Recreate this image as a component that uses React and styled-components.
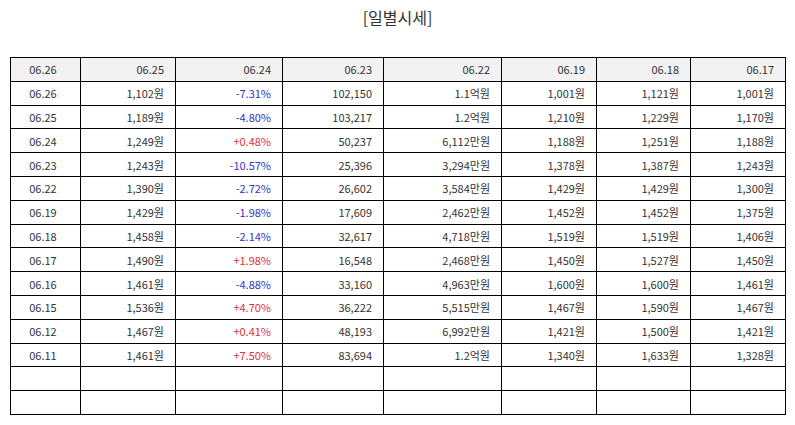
import React from 'react';
import styled, { createGlobalStyle } from 'styled-components';

const GlobalStyle = createGlobalStyle`
  html, body {
    margin: 0;
    padding: 0;
    background: #fff;
  }
  body {
    font-family: 'Noto Sans CJK KR', 'Noto Sans', sans-serif;
  }
`;

const heads = ['06.26', '06.25', '06.24', '06.23', '06.22', '06.19', '06.18', '06.17'];

const rows = [
  ['06.26', '1,102원', '-7.31%', '102,150', '1.1억원', '1,001원', '1,121원', '1,001원'],
  ['06.25', '1,189원', '-4.80%', '103,217', '1.2억원', '1,210원', '1,229원', '1,170원'],
  ['06.24', '1,249원', '+0.48%', '50,237', '6,112만원', '1,188원', '1,251원', '1,188원'],
  ['06.23', '1,243원', '-10.57%', '25,396', '3,294만원', '1,378원', '1,387원', '1,243원'],
  ['06.22', '1,390원', '-2.72%', '26,602', '3,584만원', '1,429원', '1,429원', '1,300원'],
  ['06.19', '1,429원', '-1.98%', '17,609', '2,462만원', '1,452원', '1,452원', '1,375원'],
  ['06.18', '1,458원', '-2.14%', '32,617', '4,718만원', '1,519원', '1,519원', '1,406원'],
  ['06.17', '1,490원', '+1.98%', '16,548', '2,468만원', '1,450원', '1,527원', '1,450원'],
  ['06.16', '1,461원', '-4.88%', '33,160', '4,963만원', '1,600원', '1,600원', '1,461원'],
  ['06.15', '1,536원', '+4.70%', '36,222', '5,515만원', '1,467원', '1,590원', '1,467원'],
  ['06.12', '1,467원', '+0.41%', '48,193', '6,992만원', '1,421원', '1,500원', '1,421원'],
  ['06.11', '1,461원', '+7.50%', '83,694', '1.2억원', '1,340원', '1,633원', '1,328원'],
];

const widths = [70, 95, 107, 101, 118, 95, 94, 95];

const Page = styled.div`
  padding: 0 10px;
`;

const Title = styled.h2`
  margin: 0;
  padding-top: 6px;
  height: 57px;
  box-sizing: border-box;
  text-align: center;
  font-size: 16px;
  font-weight: 400;
  color: #333;
  line-height: 22px;
`;

const Table = styled.table`
  width: 775px;
  border-collapse: collapse;
  table-layout: fixed;
  font-size: 11px;
  color: #333;
`;

const Row = styled.tr`
  height: 23.8px;
`;

const Cell = styled.td`
  border: 1px solid #000;
  padding: 0 11px 0 6px;
  text-align: ${(p) => (p.$first ? 'center' : 'right')};
  background: ${(p) => (p.$head ? '#f2f2f2' : '#fff')};
  color: ${(p) => (p.$tone === 'up' ? '#e0303a' : p.$tone === 'down' ? '#3434cc' : '#333')};
  white-space: nowrap;
  line-height: 14px;
  vertical-align: middle;
`;

const toneOf = (v) => (v.startsWith('+') ? 'up' : v.startsWith('-') ? 'down' : undefined);

const App = () => {
  const blanks = [0, 1].map(() => Array(8).fill(''));
  return (
    <Page>
      <GlobalStyle />
      <Title>[일별시세]</Title>
      <Table>
        <colgroup>
          {widths.map((w, i) => (
            <col key={i} style={{ width: w }} />
          ))}
        </colgroup>
        <tbody>
          <Row>
            {heads.map((h, i) => (
              <Cell key={i} $head $first={i === 0}>
                {h}
              </Cell>
            ))}
          </Row>
          {[...rows, ...blanks].map((r, i) => (
            <Row key={i}>
              {r.map((v, j) => (
                <Cell key={j} $first={j === 0} $tone={j === 2 ? toneOf(v) : undefined}>
                  {v}
                </Cell>
              ))}
            </Row>
          ))}
        </tbody>
      </Table>
    </Page>
  );
};

export default App;
